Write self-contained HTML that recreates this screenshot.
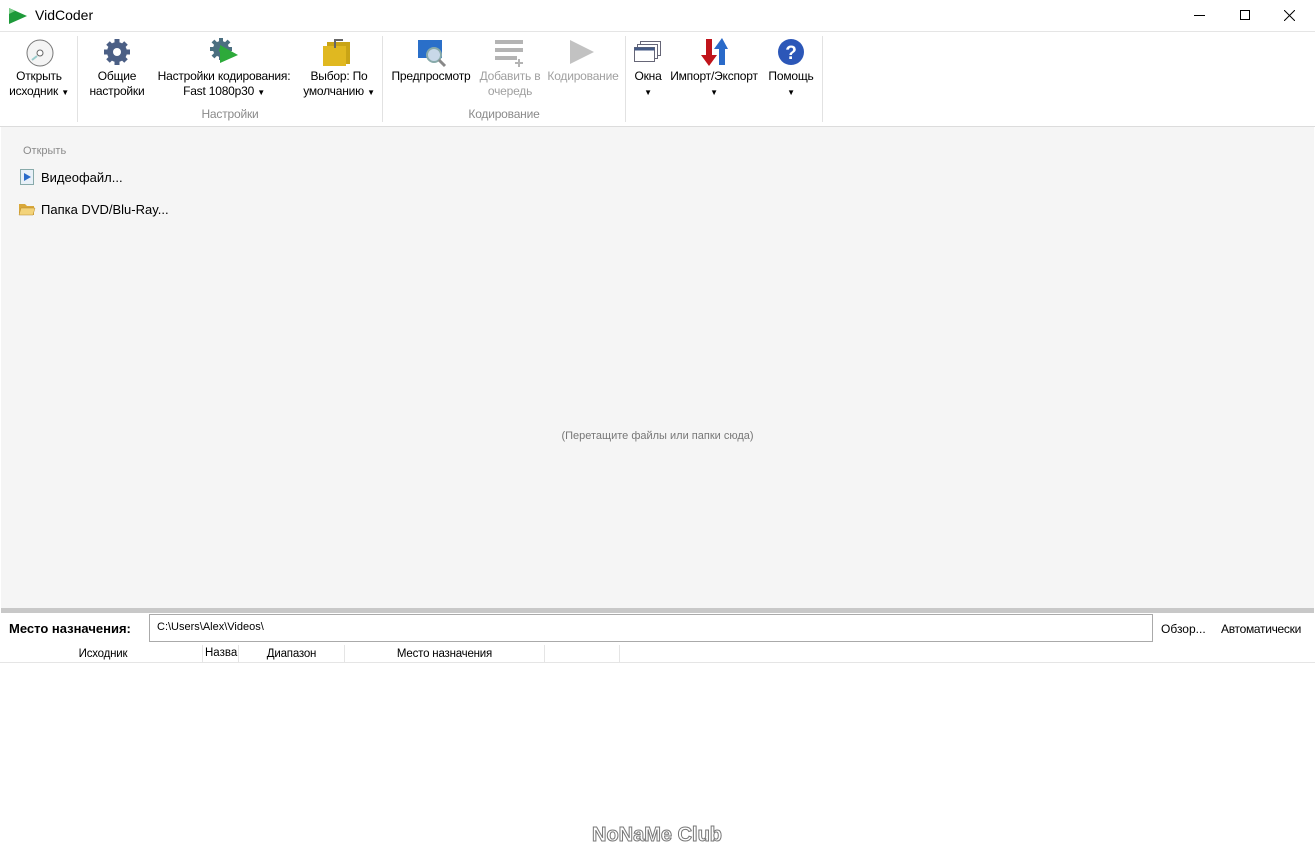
<!DOCTYPE html>
<html><head><meta charset="utf-8"><style>
*{margin:0;padding:0;box-sizing:border-box}
body{width:1315px;height:855px;background:#fff;font-family:"Segoe UI","Liberation Sans","DejaVu Sans",sans-serif;font-size:12px;color:#000;position:relative;overflow:hidden}
.a{position:absolute}
.t{white-space:nowrap;text-align:center;line-height:15px;letter-spacing:-0.2px}
.g{color:#8a8a8a}
.sep{position:absolute;top:36px;width:1px;height:86px;background:#e2e2e2}
.dd{font-size:8px}
</style></head><body>
<svg class="a" style="left:7px;top:6px" width="22" height="20"><polygon points="2,2 20,10 2,18" fill="#1e9a3a"/><polygon points="2,2 8,5 2,8" fill="#7ccf8a"/></svg>
<div class="a" style="left:35px;top:7px;font-size:14px">VidCoder</div>
<div class="a" style="left:1194px;top:15px;width:11px;height:1px;background:#000"></div>
<div class="a" style="left:1240px;top:10px;width:10px;height:10px;border:1px solid #000"></div>
<svg class="a" style="left:1284px;top:10px" width="11" height="11"><path d="M0 0L11 11M11 0L0 11" stroke="#000" stroke-width="1"/></svg>
<div class="a" style="left:0;top:31px;width:1315px;height:1px;background:#e5e5e5"></div>
<div class="a" style="left:0;top:126px;width:1315px;height:1px;background:#dcdcdc"></div>
<div class="sep" style="left:77px"></div><div class="sep" style="left:382px"></div><div class="sep" style="left:625px"></div><div class="sep" style="left:822px"></div>
<svg class="a" style="left:25px;top:38px" width="30" height="30"><circle cx="15" cy="15" r="13" fill="#f4f4f4" stroke="#777"/><circle cx="15" cy="15" r="3" fill="#fff" stroke="#666"/><path d="M7 22 L12 18" stroke="#9cc" stroke-width="2"/></svg>
<div class="a t" style="left:5px;top:69px;width:68px">Открыть<br>исходник <span class="dd">▼</span></div>
<svg class="a" style="left:103px;top:38px" width="28" height="28"><circle cx="14" cy="14" r="10" fill="#4b5f85"/><g stroke="#4b5f85" stroke-width="5"><path d="M14 1v26M1 14h26M5 5l18 18M23 5L5 23"/></g><circle cx="14" cy="14" r="4" fill="#fff"/></svg>
<div class="a t" style="left:82px;top:69px;width:70px">Общие<br>настройки</div>
<svg class="a" style="left:208px;top:37px" width="32" height="28"><circle cx="13" cy="12" r="8" fill="#4b6f80"/><g stroke="#4b6f80" stroke-width="4"><path d="M13 1v22M2 12h22M5 4l16 16M21 4L5 20"/></g><polygon points="12,8 30,18 12,26" fill="#2daa3a"/><circle cx="14" cy="13" r="3" fill="#2daa3a"/></svg>
<div class="a t" style="left:150px;top:69px;width:148px">Настройки кодирования:<br>Fast 1080p30 <span class="dd">▼</span></div>
<svg class="a" style="left:322px;top:37px" width="30" height="30"><rect x="5" y="5" width="23" height="22" fill="#c9a416"/><rect x="1" y="9" width="23" height="20" fill="#e0b820"/><path d="M13 11V3h8" stroke="#666" stroke-width="2" fill="none"/></svg>
<div class="a t" style="left:298px;top:69px;width:82px">Выбор: По<br>умолчанию <span class="dd">▼</span></div>
<div class="a t g" style="left:182px;top:107px;width:96px">Настройки</div>
<svg class="a" style="left:417px;top:39px" width="32" height="30"><rect x="1" y="1" width="24" height="18" fill="#2a6fc9"/><circle cx="17" cy="16" r="7" fill="#c8d8e8" stroke="#8aa" stroke-width="2"/><path d="M22 21l6 6" stroke="#888" stroke-width="3"/></svg>
<div class="a t" style="left:388px;top:69px;width:86px">Предпросмотр</div>
<svg class="a" style="left:495px;top:38px" width="30" height="30"><g fill="#b4b4b4"><rect x="0" y="2" width="28" height="4"/><rect x="0" y="10" width="28" height="4"/><rect x="0" y="18" width="22" height="4"/></g><path d="M24 21v8M20 25h8" stroke="#b4b4b4" stroke-width="2"/></svg>
<div class="a t" style="left:474px;top:69px;width:72px;color:#a0a0a0">Добавить в<br>очередь</div>
<svg class="a" style="left:568px;top:38px" width="28" height="28"><polygon points="2,2 26,14 2,26" fill="#c2c2c2"/></svg>
<div class="a t" style="left:544px;top:69px;width:78px;color:#a0a0a0">Кодирование</div>
<div class="a t g" style="left:455px;top:107px;width:98px">Кодирование</div>
<svg class="a" style="left:633px;top:40px" width="30" height="26"><g fill="#fff" stroke="#667"><rect x="7.5" y="1.5" width="20" height="14"/><rect x="4.5" y="4.5" width="20" height="14"/><rect x="1.5" y="7.5" width="20" height="14"/></g><rect x="1.5" y="7.5" width="20" height="3" fill="#445a85"/></svg>
<div class="a t" style="left:628px;top:69px;width:40px">Окна<br><span class="dd">▼</span></div>
<svg class="a" style="left:700px;top:37px" width="28" height="30"><path d="M6 2v16H1l8 11 8-11h-5V2z" fill="#c0141b"/><path d="M19 28V12h-5l8-11 6 11h-3v16z" fill="#2a6ac9"/></svg>
<div class="a t" style="left:664px;top:69px;width:100px">Импорт/Экспорт<br><span class="dd">▼</span></div>
<svg class="a" style="left:777px;top:38px" width="28" height="28"><circle cx="14" cy="14" r="13" fill="#2c57b8"/><text x="14" y="21" text-anchor="middle" font-size="19" font-weight="bold" fill="#fff" font-family="Liberation Sans">?</text></svg>
<div class="a t" style="left:762px;top:69px;width:58px">Помощь<br><span class="dd">▼</span></div>
<div class="a" style="left:1px;top:127px;width:1313px;height:482px;background:#f5f5f5"></div>
<div class="a g" style="left:23px;top:145px;font-size:11px">Открыть</div>
<svg class="a" style="left:19px;top:169px" width="16" height="16"><rect x="1.5" y="0.5" width="13" height="15" fill="#e8f0f8" stroke="#8aa"/><polygon points="5,4 12,8 5,12" fill="#2a6ac9"/></svg>
<div class="a" style="left:41px;top:170px;font-size:13px">Видеофайл...</div>
<svg class="a" style="left:18px;top:201px" width="18" height="16"><path d="M1 3h6l2 2h7v9H1z" fill="#d9a83a"/><path d="M3 7h14l-2 7H1z" fill="#f3d37a" stroke="#b98a2a" stroke-width=".5"/></svg>
<div class="a" style="left:41px;top:202px;font-size:13px">Папка DVD/Blu-Ray...</div>
<div class="a" style="left:0;top:430px;width:1315px;text-align:center;font-size:11px;color:#777">(Перетащите файлы или папки сюда)</div>
<div class="a" style="left:1px;top:608px;width:1313px;height:5px;background:#c8c8c8"></div>
<div class="a" style="left:9px;top:621px;font-size:13px;font-weight:bold">Место назначения:</div>
<div class="a" style="left:149px;top:614px;width:1004px;height:28px;border:1px solid #aaa;background:#fff;padding:6px 7px;font-size:11px">C:\Users\Alex\Videos\</div>
<div class="a" style="left:1161px;top:622px;font-size:12px">Обзор...</div>
<div class="a" style="left:1221px;top:622px;font-size:12px;letter-spacing:-0.3px">Автоматически</div>
<div class="a" style="left:0;top:645px;width:1315px;height:18px;border-bottom:1px solid #e5e5e5"></div>
<div class="a t" style="left:4px;top:647px;width:198px;font-size:11.5px">Исходник</div>
<div class="a" style="left:202px;top:645px;width:1px;height:18px;background:#e5e5e5"></div>
<div class="a" style="left:205px;top:647px;font-size:11.5px">Назва</div>
<div class="a" style="left:238px;top:645px;width:1px;height:18px;background:#e5e5e5"></div>
<div class="a t" style="left:239px;top:647px;width:105px;font-size:11.5px">Диапазон</div>
<div class="a" style="left:344px;top:645px;width:1px;height:18px;background:#e5e5e5"></div>
<div class="a t" style="left:345px;top:647px;width:199px;font-size:11.5px">Место назначения</div>
<div class="a" style="left:544px;top:645px;width:1px;height:18px;background:#e5e5e5"></div>
<div class="a" style="left:619px;top:645px;width:1px;height:18px;background:#e5e5e5"></div>
<div class="a" style="left:592px;top:824px;font-size:20px;font-weight:bold;color:#fff;-webkit-text-stroke:1px #777">NoNaMe Club</div>
</body></html>
